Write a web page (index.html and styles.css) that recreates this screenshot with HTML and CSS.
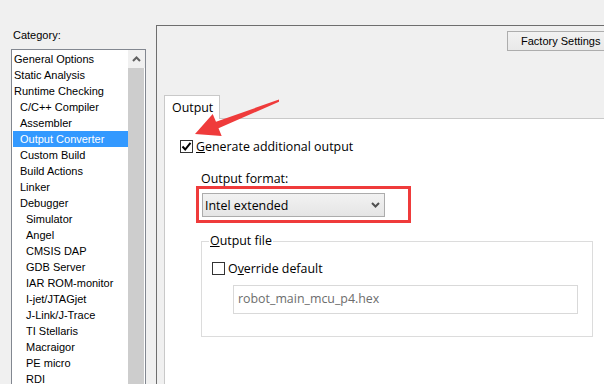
FILE: index.html
```html
<!DOCTYPE html>
<html lang="en">
<head>
    <title>Options - Output Converter</title>
    <meta charset="utf-8">
    <link rel="stylesheet" href="styles.css">
</head>
<body>
    <div class="window">
        <!-- Category tree -->
        <aside class="category">
            <div class="category-label">Category:</div>
            <div class="listbox">
                <ul class="tree">
                    <li class="lvl0">General Options</li>
                    <li class="lvl0">Static Analysis</li>
                    <li class="lvl0">Runtime Checking</li>
                    <li class="lvl1">C/C++ Compiler</li>
                    <li class="lvl1">Assembler</li>
                    <li class="lvl1 selected">Output Converter</li>
                    <li class="lvl1">Custom Build</li>
                    <li class="lvl1">Build Actions</li>
                    <li class="lvl1">Linker</li>
                    <li class="lvl1">Debugger</li>
                    <li class="lvl2">Simulator</li>
                    <li class="lvl2">Angel</li>
                    <li class="lvl2">CMSIS DAP</li>
                    <li class="lvl2">GDB Server</li>
                    <li class="lvl2">IAR ROM-monitor</li>
                    <li class="lvl2">I-jet/JTAGjet</li>
                    <li class="lvl2">J-Link/J-Trace</li>
                    <li class="lvl2">TI Stellaris</li>
                    <li class="lvl2">Macraigor</li>
                    <li class="lvl2">PE micro</li>
                    <li class="lvl2">RDI</li>
                </ul>
                <div class="scrollbar">
                    <div class="scroll-up">
                        <svg width="9" height="6" viewBox="0 0 9 6"><path d="M1 5 L4.5 1.5 L8 5" fill="none" stroke="#606060" stroke-width="2"/></svg>
                    </div>
                    <div class="scroll-track"></div>
                </div>
            </div>
        </aside>

        <!-- Options page -->
        <main class="options">
            <div class="toolbar">
                <button class="factory">Factory Settings</button>
            </div>

            <div class="tabs">
                <div class="tab-strip">
                    <div class="tab">Output</div>
                </div>
                <div class="tab-page">
                    <div class="check-row main-check">
                        <span class="checkbox checked">
                            <svg width="11" height="11" viewBox="0 0 11 11"><path d="M1.5 5.5 L4.2 8.5 L9.5 1.8" fill="none" stroke="#000" stroke-width="2"/></svg>
                        </span>
                        <span class="check-label"><u>G</u>enerate additional output</span>
                    </div>

                    <div class="format">
                        <div class="format-label">Output format:</div>
                        <div class="highlight-box">
                            <div class="dropdown">
                                <span>Intel extended</span>
                                <svg width="9" height="6" viewBox="0 0 9 6"><path d="M1 1 L4.5 4.5 L8 1" fill="none" stroke="#505050" stroke-width="2"/></svg>
                            </div>
                        </div>
                    </div>

                    <fieldset class="group">
                        <legend><u>O</u>utput file</legend>
                        <div class="check-row">
                            <span class="checkbox"></span>
                            <span class="check-label">O<u>v</u>erride default</span>
                        </div>
                        <div class="file-input">robot_main_mcu_p4.hex</div>
                    </fieldset>
                </div>
            </div>
        </main>
    </div>

    <!-- red annotation arrow -->
    <svg class="annot-arrow" width="604" height="384" viewBox="0 0 604 384">
        <polygon points="279,99.5 216,121.8 212.7,113.9 195,134 221.7,136.1 218.5,128.2 279,101.8" fill="#ef3b3b"/>
    </svg>
</body>
</html>
```

FILE: styles.css
```css
body {
    margin: 0;
    background: #f0f0f0;
    overflow: hidden;
    position: relative;
    font-family: "Liberation Sans", Arial, sans-serif;
    font-size: 11px;
    color: #000;
}

.window {
    display: flex;
    height: 384px;
    overflow: hidden;
}

/* left side */
.category {
    flex: none;
    width: 135px;
    padding-left: 11px;
}
.category-label {
    padding: 28px 0 0 2px;
    line-height: 14px;
}
.listbox {
    margin-top: 7px;
    height: 345px;
    display: flex;
    border: 1px solid #828790;
    background: #ffffff;
}
.tree {
    list-style: none;
    margin: 0 0 0 1px;
    padding: 1px 0 0 0;
    width: 115px;
}
.tree li {
    height: 16px;
    line-height: 16px;
    white-space: nowrap;
}
.tree .lvl0 { padding-left: 1px; }
.tree .lvl1 { padding-left: 7px; }
.tree .lvl2 { padding-left: 13px; }
.tree .selected {
    background: #3399ff;
    color: #ffffff;
}
.scrollbar {
    width: 17px;
    display: flex;
    flex-direction: column;
}
.scroll-up {
    height: 18px;
    display: flex;
    align-items: center;
    justify-content: center;
    background: #f0f0f0;
}
.scroll-track {
    flex: 1;
    background: #cdcdcd;
    margin-right: 1px;
}

/* right side */
.options {
    flex: none;
    width: 460px;
    margin: 25px 0 0 10px;
    border-top: 1px solid #6e6e6e;
    border-left: 1px solid #6e6e6e;
}
.toolbar {
    display: flex;
    padding: 5px 0 0 350px;
}
.factory {
    flex: none;
    height: 20px;
    padding: 0 13px;
    border: 1px solid #adadad;
    background: linear-gradient(#f2f2f2, #e9e9e9);
    font-family: "Liberation Sans", Arial, sans-serif;
    font-size: 11px;
    color: #000;
}

.tabs {
    margin: 44px 0 0 7px;
    font-family: "Open Sans", "Noto Sans", sans-serif;
    font-size: 12.4px;
}
.tab-strip {
    display: flex;
}
.tab {
    height: 23px;
    line-height: 23px;
    padding: 0 7px;
    width: 40px;
    border: 1px solid #c9c9c9;
    border-bottom: none;
    background: #ffffff;
    margin-bottom: -1px;
    position: relative;
}
.tab-page {
    height: 300px;
    border: 1px solid #c9c9c9;
    background: #ffffff;
}

.check-row {
    display: flex;
    align-items: center;
    height: 13px;
}
.main-check {
    margin: 21px 0 0 15px;
}
.checkbox {
    width: 13px;
    height: 13px;
    box-sizing: border-box;
    border: 1px solid #333333;
    background: #ffffff;
    display: flex;
    align-items: center;
    justify-content: center;
}
.check-label {
    margin-left: 3px;
    line-height: 16px;
    white-space: nowrap;
}

.format {
    margin: 19px 0 0 31px;
}
.format-label {
    padding-left: 5px;
    line-height: 14px;
}
.highlight-box {
    width: fit-content;
    border: 3px solid #ef3b3b;
    padding: 4px 23px 3px 3px;
}
.dropdown {
    width: 183px;
    height: 24px;
    box-sizing: border-box;
    border: 1px solid #acacac;
    background: linear-gradient(#f2f2f2, #e5e5e5);
    display: flex;
    align-items: center;
    justify-content: space-between;
    padding: 0 4px 0 2px;
}

.group {
    width: 392px;
    box-sizing: border-box;
    margin: 10px 0 0 36px;
    padding: 0 0 22px 7px;
    border: 1px solid #dcdcdc;
}
.group legend {
    padding: 0 1px;
    line-height: 16px;
}
.group .check-row {
    margin: 13px 0 0 3px;
}
.file-input {
    margin: 10px 0 0 24px;
    width: 345px;
    height: 29px;
    box-sizing: border-box;
    border: 1px solid #d9d9d9;
    padding: 0 4px;
    line-height: 25px;
    color: #6d6d6d;
}

/* annotation overlay */
.annot-arrow {
    position: absolute;
    left: 0;
    top: 0;
    pointer-events: none;
}
```
